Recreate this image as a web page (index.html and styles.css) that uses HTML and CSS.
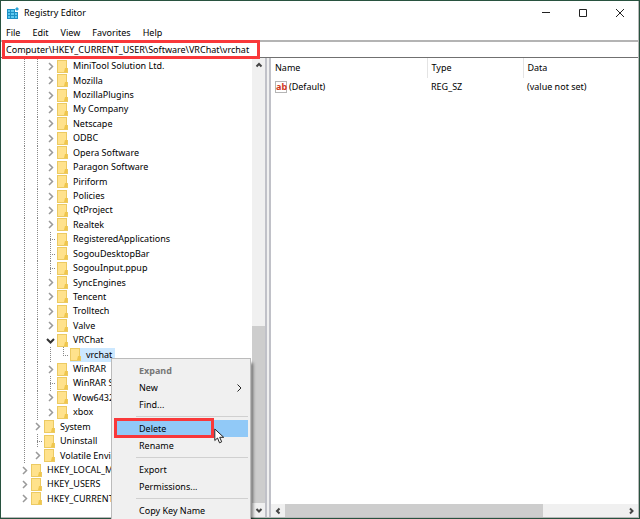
FILE: index.html
```
<!DOCTYPE html>
<html lang="en">
<head>
    <meta charset="UTF-8">
    <meta name="viewport" content="width=device-width, initial-scale=1.0">
    <title>Registry Editor</title>
    <link rel="stylesheet" href="styles.css">
</head>
<body>
    <div class="window">
        <header class="titlebar">
            <svg class="logo" viewBox="0 0 12 12">
                <path fill="#1b8fc4" d="M0 2h8v3h3v7H0z"/>
                <path fill="#5cc8ee" d="M1 3h2v2H1zM4 3h3v2H4zM1 6h2v2H1zM4 6h3v2H4zM8 6h2v2H8zM1 9h2v2H1zM4 9h3v2H4zM8 9h2v2H8z"/>
                <path fill="#2aa4d8" d="M10 0l2 2-2 2-2-2z"/>
            </svg>
            <h1>Registry Editor</h1>
            <button class="control" aria-label="Minimize"><svg viewBox="0 0 10 10"><path d="M1 4.5h8"/></svg></button>
            <button class="control" aria-label="Maximize"><svg viewBox="0 0 10 10"><path d="M1.5 1.5h7v7h-7z"/></svg></button>
            <button class="control" aria-label="Close"><svg viewBox="0 0 10 10"><path d="M1 1l8 8M9 1l-8 8"/></svg></button>
        </header>

        <nav class="menubar">
            <button>File</button>
            <button>Edit</button>
            <button>View</button>
            <button>Favorites</button>
            <button>Help</button>
        </nav>

        <div class="address">
            <input type="text" aria-label="Address" value="Computer\HKEY_CURRENT_USER\Software\VRChat\vrchat">
            <span class="mark"></span>
        </div>

        <main class="panes">
            <section class="pane keys">
                <ul class="tree" id="tree"></ul>
                <div class="scroll vertical">
                    <svg viewBox="0 0 8 8"><path d="M1.5 5.5L4 3l2.500 2.500"/></svg>
                    <div class="track"><div class="thumb"></div></div>
                    <svg viewBox="0 0 8 8"><path d="M1.500 3L4 5.500 6.500 3"/></svg>
                </div>
            </section>
            <section class="pane values">
                <table>
                    <thead>
                        <tr><th class="name">Name</th><th class="type">Type</th><th>Data</th></tr>
                    </thead>
                    <tbody>
                        <tr>
                            <td><span class="value"><span class="ab">ab</span>(Default)</span></td>
                            <td>REG_SZ</td>
                            <td>(value not set)</td>
                        </tr>
                    </tbody>
                </table>
                <div class="scroll horizontal">
                    <svg viewBox="0 0 8 8"><path d="M5.500 1.500L3 4l2.500 2.500"/></svg>
                    <div class="track"><div class="thumb"></div></div>
                    <svg viewBox="0 0 8 8"><path d="M3 1.500L5.500 4 3 6.500"/></svg>
                </div>
            </section>
        </main>
    </div>

    <div class="context">
        <button class="item default" disabled>Expand</button>
        <button class="item">New<svg viewBox="0 0 8 8"><path d="M2.500 .5L6 4 2.500 7.500"/></svg></button>
        <button class="item">Find...</button>
        <hr>
        <button class="item active">Delete<span class="mark"></span></button>
        <button class="item">Rename</button>
        <hr>
        <button class="item">Export</button>
        <button class="item">Permissions...</button>
        <hr>
        <button class="item">Copy Key Name</button>
        <svg class="cursor" viewBox="0 0 11 16"><path d="M.8 1v11.500l2.700-2.500 2 4.800 2.200-1-2-4.500h4z"/></svg>
    </div>
    <script src="tree.js"></script>
</body>
</html>
```
FILE: styles.css
```
* {
    box-sizing: border-box;
}

body {
    margin: 0;
    height: 100vh;
    padding: 1px;
    overflow: hidden;
    background: #28523f;
    color: #000;
    font: 9px/14px "Noto Sans", "Open Sans", sans-serif;
}

button, input {
    font: inherit;
    color: inherit;
    background: none;
    border: 0;
    padding: 0;
    margin: 0;
}

svg {
    fill: none;
    stroke: #222;
}

.window {
    display: flex;
    flex-direction: column;
    height: 100%;
    background: #fff;
    border-right: 1px solid #b8b8b8;
    border-bottom: 1px solid #b8b8b8;
}

/* title bar */

.titlebar {
    display: flex;
    align-items: center;
    height: 24px;
    padding-left: 6px;
}

.logo {
    width: 12px;
    height: 12px;
    stroke: none;
}

.titlebar h1 {
    flex: 1;
    margin: 0 0 0 5px;
    font-size: 9px;
    font-weight: 400;
}

.control {
    display: flex;
    justify-content: center;
    align-items: center;
    width: 37px;
    height: 24px;
}

.control svg {
    width: 10px;
    height: 10px;
}

.menubar {
    display: flex;
    gap: 12px;
    height: 15px;
    padding-left: 5px;
}

.address {
    position: relative;
    height: 18px;
    border-top: 2px solid #b4b4b4;
    border-bottom: 1px solid #707070;
}

.address input {
    display: block;
    width: 100%;
    height: 15px;
    padding-left: 5px;
}

.mark {
    position: absolute;
    border: 3px solid #f9383a;
}

.address .mark {
    top: -2px;
    left: 1px;
    width: 258px;
    height: 19px;
}

/* panes */

.panes {
    flex: 1;
    display: flex;
    gap: 2px;
    min-height: 0;
    background: #f0f0f0;
}

.pane {
    display: flex;
    background: #fff;
}

.keys {
    width: 266px;
    border-right: 2px solid #c0c1c8;
}

.values {
    flex: 1;
    flex-direction: column;
    justify-content: space-between;
    border-left: 2px solid #c0c1c8;
}

.tree {
    flex: 1;
    display: flex;
    flex-direction: column;
    margin: 0;
    padding: 1px 0 11px 17px;
    list-style: none;
}

.tree li {
    flex: 1;
    display: flex;
    align-items: center;
    min-height: 0;
    white-space: nowrap;
}

.tree i {
    position: relative;
    align-self: stretch;
    width: 13px;
}

.line::before, .leaf::before, .last::before {
    content: "";
    position: absolute;
    left: 6px;
    top: 0;
    width: 1px;
    height: 100%;
    background: repeating-linear-gradient(#888 0 1px, #fff 1px 2px);
}

.last::before {
    height: 50%;
}

.leaf::after, .last::after {
    content: "";
    position: absolute;
    left: 6px;
    top: 50%;
    width: 6px;
    height: 1px;
    background: repeating-linear-gradient(90deg, #888 0 1px, #fff 1px 2px);
}

.tree .arrow {
    display: flex;
    align-items: center;
    justify-content: center;
}

.arrow svg {
    width: 9px;
    height: 9px;
    stroke: #999;
    stroke-width: 1.5;
}

.arrow.open svg {
    stroke: #333;
    stroke-width: 2;
}

.folder {
    width: 11px;
    height: 13px;
    stroke: none;
}

.tree a {
    display: flex;
    align-items: center;
    gap: 5px;
    height: 14px;
    padding-right: 3px;
    color: inherit;
    text-decoration: none;
}

.selected a {
    background: #cce8ff;
}

/* scroll bars */

.scroll {
    display: flex;
    align-items: center;
    background: #f0f0f0;
}

.scroll svg {
    width: 8px;
    height: 8px;
    margin: 3px;
    stroke: #444;
    stroke-width: 2;
}

.track {
    flex: 1;
    display: flex;
}

.thumb {
    background: #cdcdcd;
}

.vertical {
    flex-direction: column;
    width: 13px;
}

.vertical .track {
    width: 100%;
    align-items: flex-end;
}

.vertical .thumb {
    width: 100%;
    height: 41%;
}

.horizontal {
    height: 13px;
}

.horizontal .track {
    height: 100%;
}

.horizontal .thumb {
    width: 76%;
}

/* values */

table {
    width: 100%;
    table-layout: fixed;
    border-collapse: collapse;
}

th, td {
    padding: 0 4px;
    text-align: left;
    font-weight: 400;
}

th {
    height: 20px;
    border-right: 1px solid #e4e4e4;
}

th:last-child {
    border-right: 0;
}

td {
    height: 17px;
}

.name {
    width: 156px;
}

.type {
    width: 96px;
}

.value {
    display: flex;
    align-items: center;
    gap: 2px;
}

.ab {
    width: 12px;
    height: 12px;
    border: 1px solid #b5b5b5;
    color: #d0371c;
    font-size: 9px;
    font-weight: 700;
    line-height: 9px;
    text-align: center;
}

/* context menu */

.context {
    position: absolute;
    left: 111px;
    top: 358px;
    width: 140px;
    padding: 3px 2px;
    background: #f0f0f0;
    border: 1px solid #bbb;
    box-shadow: 3px 4px 3px -1px rgba(0, 0, 0, 0.5);
}

.item {
    position: relative;
    display: flex;
    justify-content: space-between;
    align-items: center;
    width: 100%;
    height: 17px;
    padding: 0 5px 0 25px;
}

.item svg {
    width: 8px;
    height: 8px;
}

.default {
    color: #777;
    font-weight: 700;
}

.active {
    background: #91c9f7;
}

.item .mark {
    top: -2px;
    left: 0;
    width: 100px;
    height: 20px;
}

.context hr {
    height: 1px;
    margin: 3px 0 3px 22px;
    border: 0;
    background: #d0d0d0;
}

.cursor {
    position: absolute;
    left: 102px;
    top: 69px;
    width: 11px;
    height: 16px;
    fill: #fff;
}
```
FILE: tree.js
```
// depth, kind, label
const keys = [
    [3, 'arrow', 'MiniTool Solution Ltd.'],
    [3, 'arrow', 'Mozilla'],
    [3, 'arrow', 'MozillaPlugins'],
    [3, 'arrow', 'My Company'],
    [3, 'arrow', 'Netscape'],
    [3, 'arrow', 'ODBC'],
    [3, 'arrow', 'Opera Software'],
    [3, 'arrow', 'Paragon Software'],
    [3, 'arrow', 'Piriform'],
    [3, 'arrow', 'Policies'],
    [3, 'arrow', 'QtProject'],
    [3, 'arrow', 'Realtek'],
    [3, 'leaf', 'RegisteredApplications'],
    [3, 'leaf', 'SogouDesktopBar'],
    [3, 'leaf', 'SogouInput.ppup'],
    [3, 'arrow', 'SyncEngines'],
    [3, 'arrow', 'Tencent'],
    [3, 'arrow', 'Trolltech'],
    [3, 'arrow', 'Valve'],
    [3, 'arrow open', 'VRChat'],
    [4, 'last', 'vrchat'],
    [3, 'arrow', 'WinRAR'],
    [3, 'leaf', 'WinRAR SFX'],
    [3, 'arrow', 'Wow6432Node'],
    [3, 'arrow', 'xbox'],
    [2, 'arrow', 'System'],
    [2, 'leaf', 'Uninstall'],
    [2, 'arrow', 'Volatile Environment'],
    [1, 'arrow', 'HKEY_LOCAL_MACHINE'],
    [1, 'arrow', 'HKEY_USERS'],
    [1, 'arrow', 'HKEY_CURRENT_CONFIG']
];

const folder = '<svg class="folder" viewBox="0 0 11 13"><path fill="#ecca62" d="M0 0h10v8h1v5H0z"/><path fill="#ffe28c" d="M1 1h8v11H1z"/><path fill="#f0c64c" d="M8 8h2v4H7z"/></svg>';
const right = '<svg viewBox="0 0 9 9"><path d="M3 1l3.500 3.500L3 8"/></svg>';
const down = '<svg viewBox="0 0 9 9"><path d="M1 3l3.500 3.500L8 3"/></svg>';

document.getElementById('tree').innerHTML = keys.map(([depth, kind, label]) => {
    const lines = '<i class="line"></i>'.repeat(depth - 1);
    const icon = kind === 'arrow' ? right : kind === 'arrow open' ? down : '';
    const selected = kind === 'last' ? ' class="selected"' : '';
    return `<li${selected}>${lines}<i class="${kind}">${icon}</i><a href="#">${folder}${label}</a></li>`;
}).join('');
```
